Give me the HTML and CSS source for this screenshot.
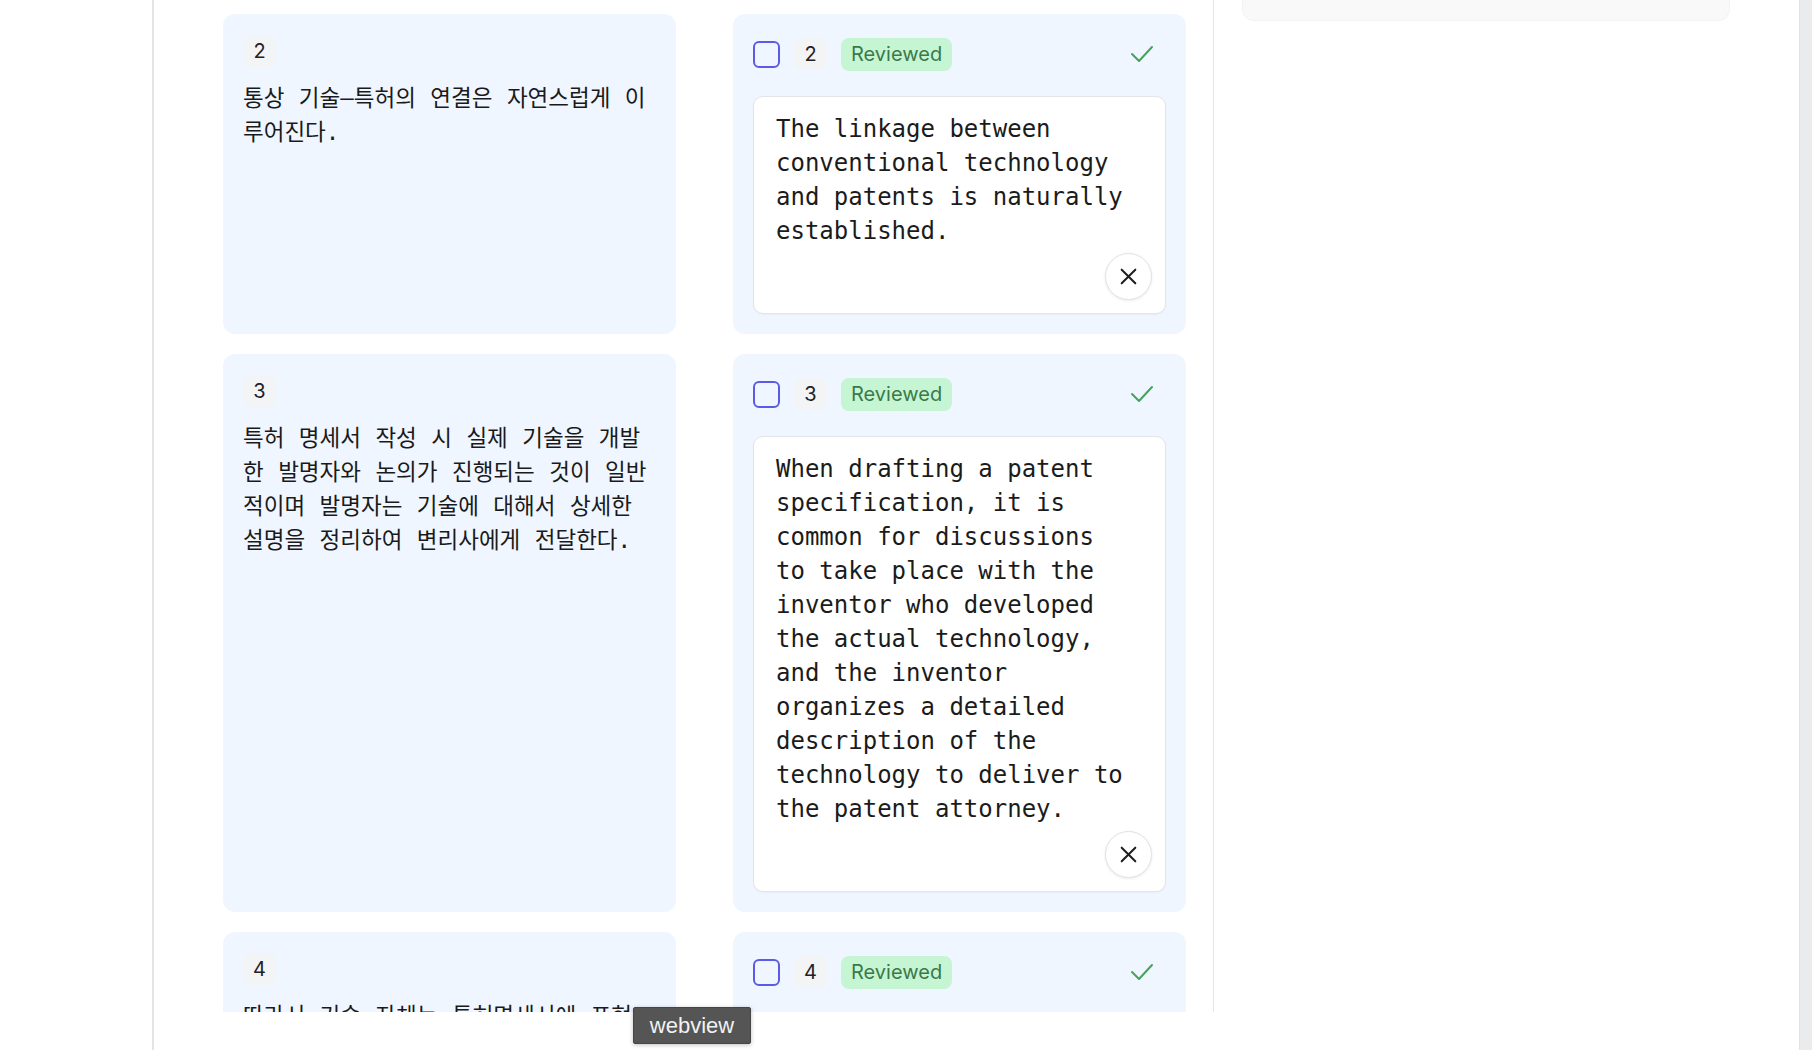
FILE: index.html
```html
<!DOCTYPE html>
<html lang="ko">
<head>
<meta charset="utf-8">
<title>Translation review</title>
<link rel="stylesheet" href="styles.css">
</head>
<body>
<div class="app">
  <aside class="sidebar"></aside>
  <main class="workspace">
    <div class="columns">
      <section class="segments">
        <div class="grid">
          <article class="card source">
            <span class="num">2</span>
            <p class="src-text">통상 기술–특허의 연결은 자연스럽게 이루어진다.</p>
          </article>
          <article class="card target">
            <div class="head">
              <span class="checkbox"></span>
              <span class="num">2</span>
              <span class="status">Reviewed</span>
              <svg class="check" width="24" height="18" viewBox="0 0 24 18"><polyline points="2,9 9,16 22,2" fill="none" stroke="currentColor" stroke-width="2" stroke-linecap="round" stroke-linejoin="round"/></svg>
            </div>
            <div class="editor">
              <div class="editor-text">The linkage between conventional technology and patents is naturally established.</div>
              <button class="clear" type="button"><svg width="20" height="20" viewBox="0 0 20 20"><path d="M2 2 L18 18 M18 2 L2 18" stroke="currentColor" stroke-width="2.4" stroke-linecap="round"/></svg></button>
            </div>
          </article>

          <article class="card source">
            <span class="num">3</span>
            <p class="src-text">특허 명세서 작성 시 실제 기술을 개발한 발명자와 논의가 진행되는 것이 일반적이며 발명자는 기술에 대해서 상세한 설명을 정리하여 변리사에게 전달한다.</p>
          </article>
          <article class="card target">
            <div class="head">
              <span class="checkbox"></span>
              <span class="num">3</span>
              <span class="status">Reviewed</span>
              <svg class="check" width="24" height="18" viewBox="0 0 24 18"><polyline points="2,9 9,16 22,2" fill="none" stroke="currentColor" stroke-width="2" stroke-linecap="round" stroke-linejoin="round"/></svg>
            </div>
            <div class="editor">
              <div class="editor-text">When drafting a patent specification, it is common for discussions to take place with the inventor who developed the actual technology, and the inventor organizes a detailed description of the technology to deliver to the patent attorney.</div>
              <button class="clear" type="button"><svg width="20" height="20" viewBox="0 0 20 20"><path d="M2 2 L18 18 M18 2 L2 18" stroke="currentColor" stroke-width="2.4" stroke-linecap="round"/></svg></button>
            </div>
          </article>

          <article class="card source">
            <span class="num">4</span>
            <p class="src-text">따라서 기술 자체는 특허명세서에 표현된 내용으로 한정된다.</p>
          </article>
          <article class="card target">
            <div class="head">
              <span class="checkbox"></span>
              <span class="num">4</span>
              <span class="status">Reviewed</span>
              <svg class="check" width="24" height="18" viewBox="0 0 24 18"><polyline points="2,9 9,16 22,2" fill="none" stroke="currentColor" stroke-width="2" stroke-linecap="round" stroke-linejoin="round"/></svg>
            </div>
            <div class="editor">
              <div class="editor-text">Therefore, the technology itself is limited to what is expressed in the patent specification.</div>
              <button class="clear" type="button"><svg width="20" height="20" viewBox="0 0 20 20"><path d="M2 2 L18 18 M18 2 L2 18" stroke="currentColor" stroke-width="2.4" stroke-linecap="round"/></svg></button>
            </div>
          </article>
        </div>
      </section>
      <aside class="side">
        <div class="side-card"></div>
      </aside>
    </div>
    <footer class="statusbar"></footer>
  </main>
  <div class="scrollbar"></div>
</div>
<div class="tooltip">webview</div>
</body>
</html>
```
FILE: styles.css
```css
* { box-sizing: border-box; }
html, body { margin: 0; padding: 0; }
body {
  width: 1812px;
  height: 1050px;
  overflow: hidden;
  background: #ffffff;
  font-family: Inter, "Noto Sans", sans-serif;
  color: #1f1f1f;
}
.app {
  display: flex;
  height: 1050px;
}
.sidebar {
  width: 152px;
  flex: none;
  background: #ffffff;
}
.workspace {
  flex: 1;
  display: flex;
  flex-direction: column;
  border-left: 2px solid #e4e4e4;
  min-width: 0;
}
.columns {
  display: flex;
  height: 1012px;
  flex: none;
}
.segments {
  width: 1060px;
  flex: none;
  border-right: 1px solid #e6e6e6;
  overflow: hidden;
  padding: 14px 27px 0 69px;
}
.grid {
  display: grid;
  grid-template-columns: 453px 453px;
  column-gap: 57px;
  row-gap: 20px;
}
.card {
  background: #eff6ff;
  border-radius: 12px;
  padding: 21px 20px 20px;
}
.num {
  display: inline-flex;
  align-items: center;
  justify-content: center;
  min-width: 33px;
  height: 32px;
  padding: 0 10px;
  background: #f3f4f5;
  border-radius: 8px;
  font-family: Inter, sans-serif;
  font-size: 20px;
  color: #222222;
}
.src-text {
  margin: 14px 0 0;
  max-width: 404px;
  font-family: "DejaVu Sans Mono", "Noto Sans CJK KR", monospace;
  font-size: 22.5px;
  word-spacing: 0.9px;
  line-height: 34px;
  color: #1a1a1a;
}
.target { padding-top: 20px; }
.head {
  display: flex;
  align-items: center;
  gap: 14px;
  height: 40px;
}
.checkbox {
  width: 27px;
  height: 27px;
  border: 2.5px solid #5b5be6;
  border-radius: 6px;
  background: transparent;
  flex: none;
}
.status {
  display: inline-flex;
  align-items: center;
  height: 33px;
  padding: 0 10px;
  background: #c6f5d4;
  border-radius: 8px;
  font-family: Inter, sans-serif;
  font-size: 20px;
  color: #3a7a49;
}
.check {
  margin-left: auto;
  margin-right: 12px;
  color: #45a35a;
}
.editor {
  position: relative;
  margin-top: 22px;
  background: #ffffff;
  border: 1px solid #e3e5e8;
  border-radius: 10px;
  box-shadow: 0 1px 2px rgba(0, 0, 0, 0.04);
  padding: 15px 32px 65px 22px;
}
.editor-text {
  font-family: "DejaVu Sans Mono", monospace;
  font-size: 24px;
  line-height: 34px;
  color: #1b1b1b;
}
.clear {
  position: absolute;
  right: 13px;
  bottom: 13px;
  width: 47px;
  height: 47px;
  border-radius: 50%;
  border: 1px solid #e2e2e2;
  background: #ffffff;
  box-shadow: 0 1px 3px rgba(0, 0, 0, 0.08);
  display: flex;
  align-items: center;
  justify-content: center;
  padding: 0;
  color: #1f1f1f;
}
.clear svg { width: 17px; height: 17px; }
.side {
  flex: 1;
  padding: 0 69px 0 28px;
}
.side-card {
  height: 21px;
  background: #f9f9f9;
  border: 1px solid #f3f3f3;
  border-top: none;
  border-radius: 0 0 12px 12px;
}
.statusbar {
  flex: 1;
  background: #ffffff;
}
.scrollbar {
  width: 13px;
  flex: none;
  background: #eaebed;
  border-left: 1px solid #e0e2e4;
}
.tooltip {
  position: absolute;
  left: 633px;
  top: 1007px;
  width: 118px;
  height: 37px;
  background: #555555;
  border: 1px solid #464646;
  border-radius: 2px;
  box-shadow: 0 1px 4px rgba(0, 0, 0, 0.25);
  color: #f2f2f2;
  font-family: "Liberation Sans", Arial, sans-serif;
  font-size: 22px;
  line-height: 35px;
  text-align: center;
}
```
